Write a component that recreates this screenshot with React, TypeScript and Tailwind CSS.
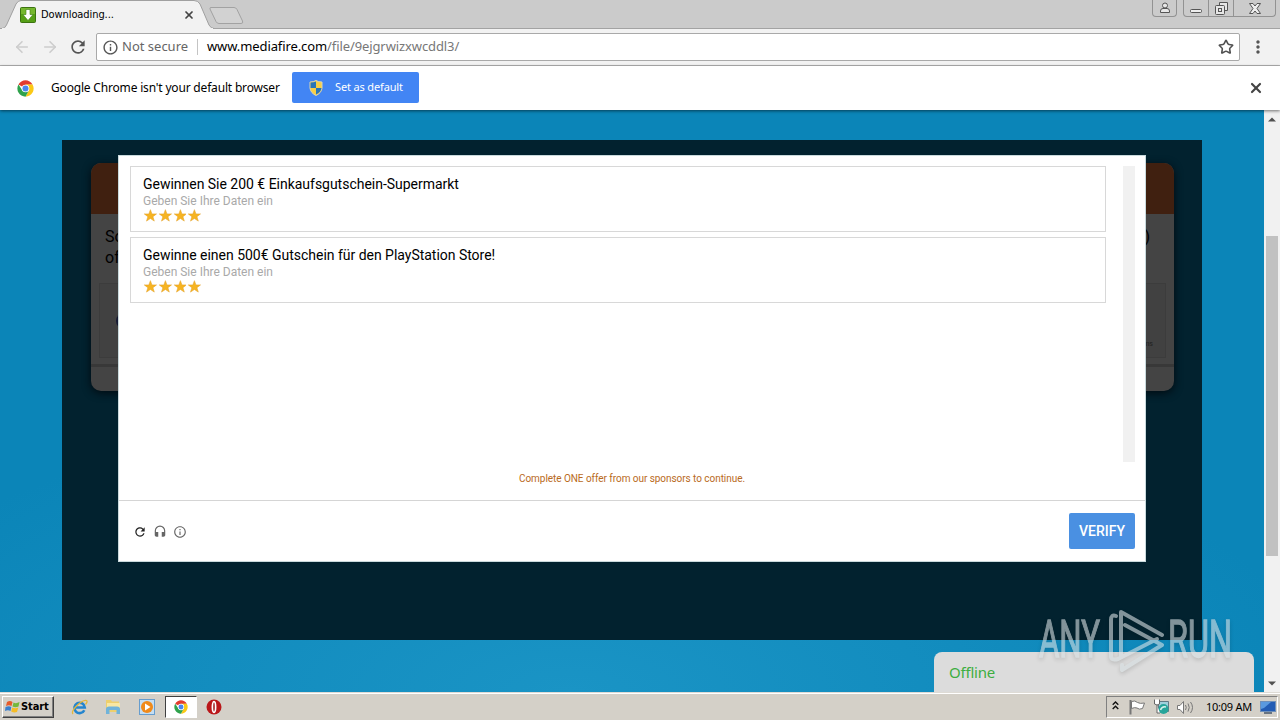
import type { ReactNode } from 'react'
import { ArrowLeft, ArrowRight, Star, X } from 'lucide-react'
import { MdHeadset, MdInfoOutline, MdMoreVert, MdRefresh } from 'react-icons/md'

const offers = [
  { title: 'Gewinnen Sie 200 € Einkaufsgutschein-Supermarkt', text: 'Geben Sie Ihre Daten ein' },
  { title: 'Gewinne einen 500€ Gutschein für den PlayStation Store!', text: 'Geben Sie Ihre Daten ein' },
]

function ChromeLogo({ size }: { size: number }) {
  return (
    <svg width={size} height={size} viewBox="0 0 48 48" className="shrink-0">
      <circle cx="24" cy="24" r="23" fill="#fff" />
      <path d="M24 24 4.1 12.5A23 23 0 0 1 43.9 12.5L24 13.5Z" fill="#e33b2e" />
      <path d="M43.9 12.5A23 23 0 0 1 24 47L33.5 29.5 34 18 24 13.5V12.5Z" fill="#fbc916" />
      <path d="M4.1 12.5A23 23 0 0 0 24 47L33.5 29.5 24 34 14.9 29.2Z" fill="#2fa24c" />
      <circle cx="24" cy="24" r="10.8" fill="#fff" />
      <circle cx="24" cy="24" r="8.5" fill="#4a86ee" />
    </svg>
  )
}

function TabStrip() {
  return (
    <div className="relative flex h-[29px] justify-between border-b border-[#a3a3a3] bg-[#cbcbcb]">
      <svg className="absolute left-0 top-0" width="250" height="29" viewBox="0 0 250 29">
        <path d="M0 28.5H2Q5 28.5 6.500 25L16 4Q18 .5 21 .5H194Q198 .5 200 4L209 25Q211 28.500 214 28.500" fill="#f2f2f2" stroke="#a0a0a0" />
        <path d="M2 28.500H213" stroke="#f2f2f2" />
        <path d="M211 7.500H234Q236 7.500 237 9.500L242.500 21Q243.500 23.500 241 23.500H219Q217 23.500 216 21.500L210 9Q209.500 7.500 211 7.500Z" fill="#d2d2d2" stroke="#a2a2a2" />
      </svg>
      <div className="relative flex h-[29px] w-[200px] items-center pl-5">
        <svg width="16" height="16" viewBox="0 0 16 16">
          <rect x=".5" y=".5" width="15" height="15" rx="1" fill="#56a016" stroke="#3c7311" />
          <path d="M1 1H15V7H1Z" fill="#75b72e" />
          <path d="M6 2.500H10V7.500H13L8 13.500 3 7.500H6Z" fill="#fff" stroke="#3f8013" strokeWidth=".6" />
        </svg>
        <span className="ml-[5px] text-[11px] leading-4 tracking-[-0.08px] text-black">Downloading...</span>
        <X className="ml-auto mr-[5px]" size={12} strokeWidth={3.500} color="#444" />
      </div>
      <div className="flex h-[17px] gap-[6px] pr-[4px]">
        <div className="flex w-[25px] items-center justify-center rounded-b border border-t-0 border-[#929292]">
          <svg width="12" height="12" viewBox="0 0 12 12" fill="#e8e8e8" stroke="#555">
            <circle cx="6" cy="3.500" r="2.500" />
            <path d="M1.500 10.500V9Q1.500 6.500 4 6.500H8Q10.500 6.500 10.500 9V10.500Z" />
          </svg>
        </div>
        <div className="flex w-[93px] rounded-b border border-t-0 border-[#929292]">
          <div className="flex w-[25px] items-end justify-center border-r border-[#929292] pb-[3px]">
            <svg width="12" height="4" viewBox="0 0 12 4"><rect x=".5" y=".5" width="11" height="3" rx="1" fill="#eee" stroke="#555" /></svg>
          </div>
          <div className="flex w-[25px] items-center justify-center border-r border-[#929292]">
            <svg width="13" height="13" viewBox="0 0 13 13" fill="#e6e6e6" stroke="#555">
              <path d="M4.500 .5H12.500V8.500H4.500Z" />
              <rect x=".5" y="3.500" width="9" height="9" rx="1" />
              <rect x="3.500" y="6.500" width="3" height="3" />
            </svg>
          </div>
          <div className="flex flex-1 items-center justify-center">
            <svg width="12" height="11" viewBox="0 0 12 11">
              <path d="M.5 .5H4L6 3 8 .5H11.500L8 5.500 11.500 10.500H8L6 8 4 10.500H.5L4 5.500Z" fill="#eee" stroke="#555" />
            </svg>
          </div>
        </div>
      </div>
    </div>
  )
}

function Toolbar() {
  return (
    <div className="flex h-[37px] items-center border-b border-[#b3b3b3] bg-[#f2f2f2] pl-[13px]">
      <ArrowLeft size={18} strokeWidth={2.200} color="#cdcdcd" />
      <ArrowRight className="ml-[10px]" size={18} strokeWidth={2.200} color="#cdcdcd" />
      <MdRefresh className="ml-[9px]" size={20} color="#555" />
      <div className="ml-2 flex h-[28px] w-[1144px] items-center rounded-[2px] border border-[#a9a9a9] bg-white pl-[5px] font-['Noto_Sans',sans-serif] text-[13px]">
        <MdInfoOutline size={17} color="#555" />
        <span className="ml-[3px] w-[75px] whitespace-nowrap text-[#666]">Not secure</span>
        <span className="h-4 w-px bg-[#c4c4c4]" />
        <span className="ml-[9px] whitespace-nowrap tracking-[-0.1px] text-black">
          www.mediafire.com<span className="text-[#777]">/file/9ejgrwizxwcddl3/</span>
        </span>
        <Star className="ml-auto mr-[5px]" size={16} strokeWidth={2.400} color="#505050" />
      </div>
      <MdMoreVert className="ml-[8px]" size={20} color="#555" />
    </div>
  )
}

function InfoBar() {
  return (
    <div className="relative z-10 flex h-[44px] items-center bg-white pl-[17px] font-['Noto_Sans',sans-serif] shadow-[0_1px_3px_rgba(0,0,0,0.55)]">
      <ChromeLogo size={17} />
      <span className="ml-[17px] w-[241px] whitespace-nowrap text-[12px] tracking-[-0.18px] text-black">
        Google Chrome isn't your default browser
      </span>
      <button className="mb-px flex h-[31px] w-[127px] items-center rounded-[2px] bg-[#4285f4] pl-[17px] text-[11px] tracking-[-0.15px] text-white">
        <svg width="14" height="16" viewBox="0 0 14 16">
          <path d="M7 .5Q9.500 2 13 2V8Q12.500 13 7 15.500Q1.500 13 1 8V2Q4.500 2 7 .5Z" fill="#f7cf45" stroke="#ddd6b0" />
          <path d="M7 1.500V8H1.500V2.500Q5 2.500 7 1.500ZM7 8H12.500Q12 12 7 14.500Z" fill="#2875b8" />
        </svg>
        <span className="ml-[12px] whitespace-nowrap">Set as default</span>
      </button>
      <X className="ml-auto mr-[16px]" size={16} strokeWidth={3.200} color="#444" />
    </div>
  )
}

function Rating() {
  return (
    <div className="ml-px flex gap-[2px]">
      {[0, 1, 2, 3].map((i) => (
        <svg key={i} width="12.800" height="13" viewBox="0 0 24 24">
          <path d="M12 1 15 9H23.500L16.800 14.200 19.300 22.500 12 17.600 4.700 22.500 7.200 14.200 .5 9H9Z" fill="#f6b422" stroke="#e5a32a" />
        </svg>
      ))}
    </div>
  )
}

function Locker() {
  return (
    <div className="absolute left-[56px] top-[15px] flex h-[407px] w-[1028px] flex-col border border-[#c9dadd] bg-white font-[Roboto,sans-serif]">
      <div className="flex h-[307px] justify-between pl-[11px] pr-[10px] pt-[10px]">
        <div className="flex w-[976px] flex-col gap-[5px]">
          {offers.map((offer) => (
            <div key={offer.title} className="h-[66px] border border-[#d8d8d8] px-3 pt-[9px]">
              <div className="text-[14px] leading-[17px] tracking-[-0.02px] text-black">{offer.title}</div>
              <div className="text-[12px] leading-4 text-[#a9a9a9]">{offer.text}</div>
              <Rating />
            </div>
          ))}
        </div>
        <div className="h-[296px] w-3 bg-[#f1f1f1]" />
      </div>
      <div className="h-[37px] pt-[9px] text-center text-[10px] leading-[13px] tracking-[-0.05px] text-[#b96a1c]">
        Complete ONE offer from our sponsors to continue.
      </div>
      <div className="flex flex-1 items-center border-t border-[#d5d5d5] pl-[14px] pr-[10px]">
        <MdRefresh className="mt-px" size={14} color="#222" />
        <MdHeadset className="ml-[6px] mt-px" size={14} color="#666" />
        <MdInfoOutline className="ml-[6px] mt-px" size={14} color="#666" />
        <button className="ml-auto h-9 w-[66px] rounded-[2px] bg-[#4a90e2] text-[14px] font-medium text-white">VERIFY</button>
      </div>
    </div>
  )
}

function PageContent() {
  return (
    <main className="relative h-full w-[1264px] overflow-hidden bg-[#0b85b8] bg-[radial-gradient(ellipse_60%_50%_at_45%_100%,#1a94c5,#0b85b8)] px-[62px] pt-[30px]">
      <div className="relative h-[500px] w-[1140px] bg-[#02222f] pl-[29px] pt-[23px]">
        <div className="h-[228px] w-[1083px] overflow-hidden rounded-[10px] bg-[#444] font-[Roboto,sans-serif] shadow-[0_2px_8px_#000a10]">
          <div className="h-[51px] bg-[#402010]" />
          <div className="flex h-[69px] justify-between px-[14px] pt-[12px] text-[16px] leading-[21px] text-black">
            <div>So<br />of</div>
            <div className="pr-[10px]">)</div>
          </div>
          <div className="mx-2 flex h-[75px] items-center justify-between border border-[#3c3c3c] bg-[#414141] pl-4 pr-3">
            <span className="h-4 w-4 rounded-full bg-[#161a33]" />
            <span className="pt-[48px] text-[7px] text-[#202020]">Terms</span>
          </div>
          <div className="mt-[6px] h-[3px] bg-[#383838]" />
        </div>
        <Locker />
      </div>
      <div className="absolute bottom-0 left-[934px] h-[40px] w-[320px] rounded-t-[8px] bg-[#dcdcdc] pl-[15px] pt-[10px] font-['Noto_Sans',sans-serif] text-[15px] leading-[21px] tracking-[-0.2px] text-[#3cae41]">
        Offline
      </div>
      <Watermark />
    </main>
  )
}

function Watermark() {
  return (
    <svg className="absolute left-[1034px] top-[493px] opacity-60 drop-shadow-[0_2px_2px_rgba(0,0,0,0.25)]" width="230" height="74" viewBox="0 0 230 74">
      {/* tall, narrow lettering */}
      <g transform="scale(1 1.6)" fill="#d7dfe2" stroke="#d7dfe2" strokeWidth=".8" fontFamily="Roboto, sans-serif" fontSize="32" fontWeight="400">
        <text x="5" y="34" textLength="61" lengthAdjust="spacingAndGlyphs">ANY</text>
        <text x="134" y="34" textLength="64" lengthAdjust="spacingAndGlyphs">RUN</text>
      </g>
      <g fill="none" stroke="#d7dfe2" strokeWidth="4" strokeLinejoin="round" strokeLinecap="round">
        <path d="M82 13Q77 11 77 17V53Q77 58 84 56L123 36" />
        <path d="M87 53V9L128 32M91 22 128 42 88 67V62" />
      </g>
    </svg>
  )
}

function Scrollbar() {
  return (
    <div className="flex w-4 flex-col items-center bg-[#f1f1f1]">
      <div className="flex h-[126px] pt-[7px]">
        <svg width="8" height="5" viewBox="0 0 8 5"><path d="M0 4.500 4 .5 8 4.500Z" fill="#505050" /></svg>
      </div>
      <div className="h-[320px] w-3 bg-[#c1c1c1]" />
      <svg className="mb-[6px] mt-auto" width="8" height="5" viewBox="0 0 8 5"><path d="M0 .5 4 4.500 8 .5Z" fill="#505050" /></svg>
    </div>
  )
}

function TaskIcon({ children }: { children: ReactNode }) {
  return <div className="flex h-[22px] w-[34px] items-center justify-center">{children}</div>
}

function Taskbar() {
  return (
    <div className="flex h-[28px] items-center border-t border-[#dedbd5] bg-[#d4d0c8] pb-px shadow-[inset_0_1px_0_#fff]">
      <button className="ml-[2px] mt-[2px] flex h-[22px] w-[52px] items-center border border-b-[#404040] border-l-white border-r-[#404040] border-t-white pl-px text-[11px] font-bold tracking-[-0.1px] text-black shadow-[inset_-1px_-1px_0_#808080]">
        <svg className="shrink-0" width="17" height="16" viewBox="0 0 17 16">
          <path d="M3 3Q6 1 8.500 3L7.500 7Q5 5.500 2 7Z" fill="#e65b2b" />
          <path d="M9.500 3.500Q12 5 15.500 3L14.500 7.500Q11.500 9 8.500 7.500Z" fill="#74b83d" />
          <path d="M1.500 8Q5 6.500 7.300 8L6.500 12Q4 10.500 1 12Z" fill="#397fce" />
          <path d="M8.300 8.500Q11.500 10 14.300 8.500L13 13Q10 14 7.200 12.500Z" fill="#f5bc26" />
        </svg>
        Start
      </button>
      <div className="ml-[8px] mt-[2px] flex items-center">
        <TaskIcon>
          <svg width="17" height="17" viewBox="0 0 17 17" fill="none">
            <path d="M13.300 11.200A5.200 5.200 0 1 1 13.800 8.500H4.500" stroke="#2485ce" strokeWidth="2.600" />
            <path d="M2 15Q0 13 5 7.500 12 .5 15.500 1.500 17 2.500 14.500 5.500" stroke="#e4b73a" strokeWidth="1.300" />
          </svg>
        </TaskIcon>
        <TaskIcon>
          <svg width="16" height="16" viewBox="0 0 16 16">
            <path d="M1 1H6L7 2.500H14V13H1Z" fill="#edcf6d" />
            <path d="M2 4H15V10H2Z" fill="#f8e7a3" />
            <path d="M1 15V10Q1 7.500 4 7.500H12Q15 7.500 15 10V15H11.500V11H4.500V15Z" fill="#70b3da" />
          </svg>
        </TaskIcon>
        <TaskIcon>
          <svg width="16" height="16" viewBox="0 0 16 16">
            <rect x=".5" y=".5" width="15" height="15" fill="#c5def2" stroke="#669dce" />
            <circle cx="8" cy="8" r="6" fill="#f08a1a" />
            <path d="M6 4.500V11.500L11.500 8Z" fill="#fff" />
          </svg>
        </TaskIcon>
        <div className="ml-px flex h-[22px] w-[32px] items-center justify-center border border-b-white border-l-[#404040] border-r-white border-t-[#404040] bg-white">
          <ChromeLogo size={14} />
        </div>
        <TaskIcon>
          <svg width="16" height="16" viewBox="0 0 16 16">
            <circle cx="8" cy="8" r="7.500" fill="#ba1719" />
            <ellipse cx="8" cy="8" rx="1.600" ry="5.300" fill="#9a0d10" stroke="#fff" strokeWidth="1.700" />
          </svg>
        </TaskIcon>
      </div>
      <div className="ml-auto mr-[2px] mt-[2px] flex h-[22px] w-[172px] items-center border border-b-white border-l-[#808080] border-r-white border-t-[#808080] pl-[5px]">
        <svg className="mb-[3px]" width="7" height="9" viewBox="0 0 7 9" fill="none" stroke="#111" strokeWidth="1.400"><path d="M.7 3.700 3.500 1 6.300 3.700M.7 8 3.500 5.300 6.300 8" /></svg>
        <svg className="ml-[10px]" width="17" height="16" viewBox="0 0 17 16" fill="#fff" stroke="#777">
          <path d="M2.500 2.500Q6 1 8.500 3.500 11 5 15.500 4L13.500 9.500Q10 11 8 9 6 8 2.500 9.500Z" />
          <path d="M1.500 1V15.500" strokeWidth="2" />
        </svg>
        <svg className="ml-[7px]" width="17" height="16" viewBox="0 0 17 16">
          <path d="M5.500 2.500H15.500V12.500H5.500Z" fill="#9fd0dc" stroke="#617a85" />
          <circle cx="10.500" cy="10" r="5" fill="#26a59a" />
          <path d="M7.500 11Q9 7 13 8" stroke="#d7f1ed" strokeWidth="1.500" fill="none" />
          <path d="M1.500 .5V5Q4 7 6.500 5V.5M4 6V14H7" fill="#fff" stroke="#666" />
        </svg>
        <svg className="ml-[7px]" width="17" height="15" viewBox="0 0 17 15" fill="none" stroke="#777">
          <path d="M.5 5.500H3L6.500 1.500V13.500L3 9.500H.5Z" fill="#fff" />
          <path d="M8.500 5Q10 7.500 8.500 10M11 3.500Q13.500 7.500 11 11.500M13.500 2Q17.500 7.500 13.500 13" />
        </svg>
        <span className="ml-[12px] w-[49px] whitespace-nowrap font-['Noto_Sans',sans-serif] text-[11px] tracking-[-0.25px] text-black">10:09 AM</span>
        <svg className="ml-[5px]" width="16" height="13" viewBox="0 0 16 13">
          <rect x=".5" y=".5" width="15" height="10" fill="#235cb4" stroke="#6e8fb9" />
          <path d="M1 1H11L4 7 1 8Z" fill="#5a99df" />
          <path d="M4 12H12" stroke="#44546a" strokeWidth="1.500" />
        </svg>
      </div>
    </div>
  )
}

export default function App() {
  return (
    <div className="flex h-[720px] w-[1280px] flex-col overflow-hidden bg-white font-['DejaVu_Sans_Condensed','DejaVu_Sans',sans-serif]">
      <TabStrip />
      <Toolbar />
      <InfoBar />
      <div className="flex h-[582px] shrink-0">
        <PageContent />
        <Scrollbar />
      </div>
      <Taskbar />
    </div>
  )
}
